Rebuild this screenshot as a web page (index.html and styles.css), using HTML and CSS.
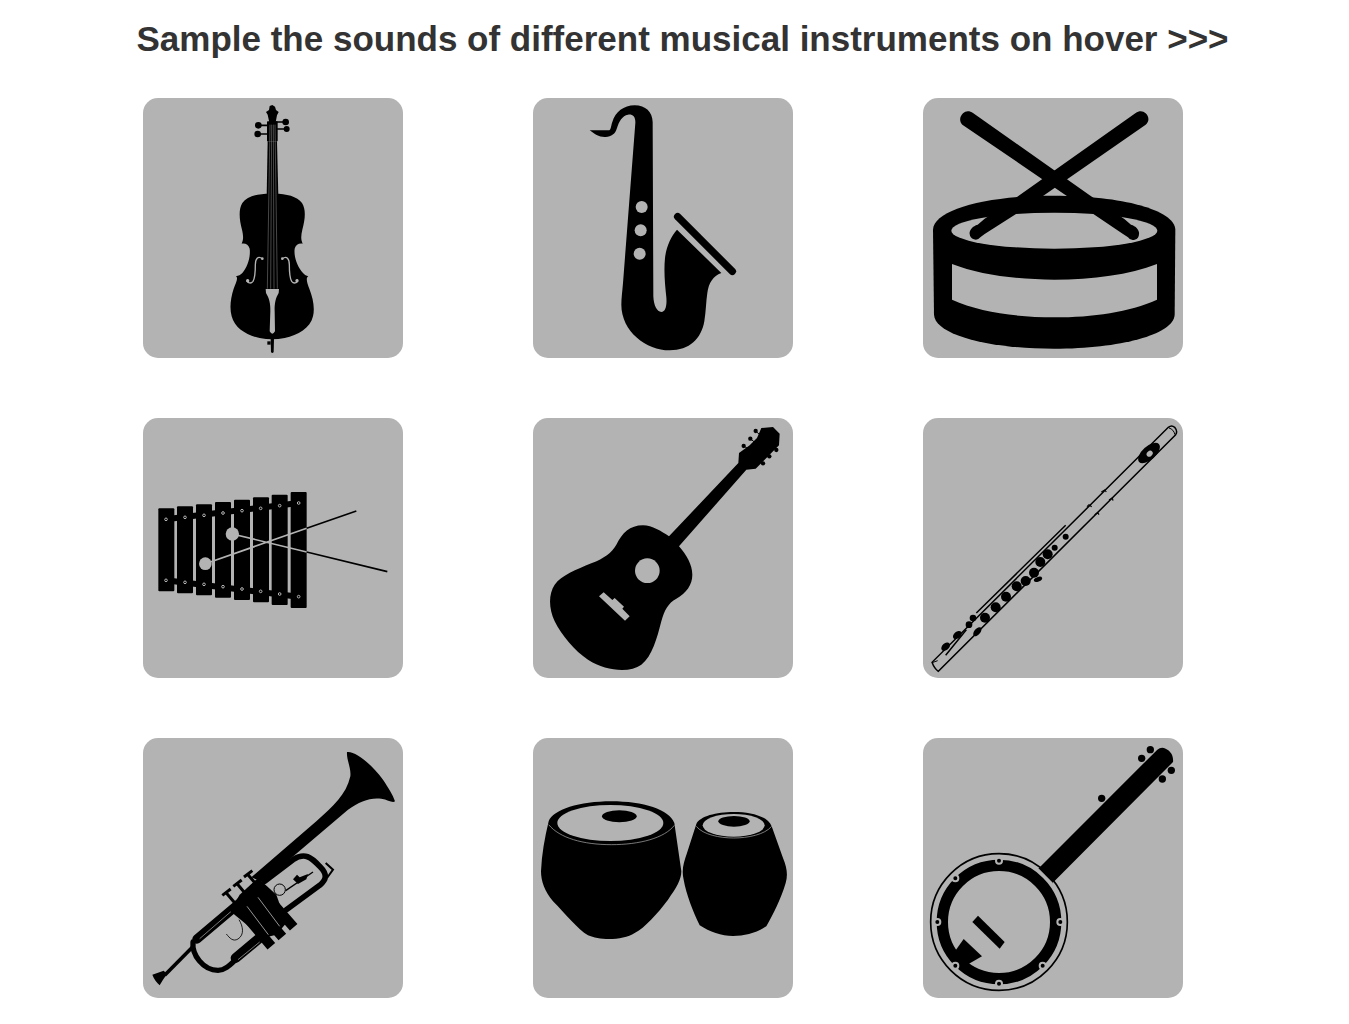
FILE: index.html
```html
<!DOCTYPE html>
<html lang="en">
<head>
<meta charset="utf-8">
<title>Musical instruments</title>
<link rel="stylesheet" href="styles.css">
</head>
<body>
<h1 class="title">Sample the sounds of different musical instruments on hover &gt;&gt;&gt;</h1>
<main class="grid">
  <div class="card"><svg class="icon" viewBox="0 0 780 780" aria-label="Cello">
    <path d="M388 287C425 286 462 293 477 315C490 335 486 365 478 395C474 412 473 425 479 437C468 435 458 440 455 452C452 475 462 505 480 525C485 531 490 533 496 535C487 540 493 555 499 572C510 600 516 630 510 655C502 690 465 712 425 720C400 725 375 725 350 720C310 712 275 690 266 655C259 630 263 600 272 572C278 555 287 540 279 535C287 533 292 531 298 525C315 505 323 475 320 452C317 440 307 435 296 437C302 425 301 412 297 395C289 365 286 335 298 315C313 293 350 286 388 287Z"/>
    <path d="M371 295L374 130H402L406 295Z"/>
    <path d="M380 78L374 50L369 42L378 36L380 24L388 21L396 26L399 36L407 42L402 52L397 78Z"/>
    <rect x="372" y="70" width="32" height="60" rx="2"/>
    <circle cx="346" cy="82" r="10"/><circle cx="344" cy="108" r="10"/><circle cx="428" cy="72" r="10"/><circle cx="431" cy="93" r="9"/>
    <path class="ln" d="M346 82H380M344 108H380M428 72H398M431 93H398" stroke-width="5"/>
    <path class="gl" d="M381 80L373 572M386 80L383 572M391 80L393 572M396 80L403 572" stroke-width="1.2"/>
    <path class="g" d="M368 573H408L407 585C398 600 394 615 395 640L396 700Q388 714 380 700L382 640C383 615 378 600 369 585Z"/>
    <path class="gl" d="M358 482C345 472 337 482 337 500C337 520 336 540 330 550C322 560 309 552 314 545M418 482C431 472 439 482 439 500C439 520 440 540 446 550C454 560 467 552 462 545" stroke-width="4"/>
    <circle class="g" cx="314" cy="548" r="5"/><circle class="g" cx="462" cy="548" r="5"/><circle class="g" cx="358" cy="482" r="4"/><circle class="g" cx="418" cy="482" r="4"/>
    <path d="M383 722H393L392 762Q388 768 384 762Z"/><rect x="373" y="730" width="10" height="10"/>
  </svg></div>
  <div class="card"><svg class="icon" viewBox="0 0 780 780" aria-label="Saxophone">
    <path d="M170 97H226C235 97 233 85 238 72C247 42 272 22 305 22C338 22 358 42 359 72L361 595C362 622 372 642 385 642C398 642 402 622 400 598C396 560 392 520 396 480C400 445 414 415 432 395L565 525C540 534 527 555 523 585C519 610 519 640 514 670C505 722 470 757 410 757C340 757 265 700 265 620C265 600 268 580 270 555L307 75C308 55 298 48 285 50C268 53 258 70 252 90C247 108 235 116 218 117C198 118 185 108 170 97Z"/>
    <circle class="g" cx="326" cy="327" r="18"/><circle class="g" cx="323" cy="397" r="18"/><circle class="g" cx="320" cy="467" r="18"/>
    <path class="ln" d="M434 356L598 520" stroke-width="22" stroke-linecap="round"/>
  </svg></div>
  <div class="card"><svg class="icon" viewBox="0 0 780 780" aria-label="Snare drum">
    <path d="M30 395C32 335 190 293 393 293C596 293 755 335 757 395L755 650C752 710 590 752 393 752C196 752 36 710 33 650Z"/>
    <ellipse class="g" cx="394" cy="398" rx="309" ry="54"/>
    <path class="g" d="M87 498C170 530 280 545 394 545C510 545 620 530 702 498V605C620 642 510 658 394 658C280 658 170 642 87 605Z"/>
    <path d="M120 46C128 38 140 38 150 45L500 292L605 364L624 380C640 384 650 398 648 408A18 18 0 0 1 615 418L600 408L470 320L118 80C108 70 110 56 120 46Z"/>
    <path d="M668 46C660 38 648 38 638 45L285 295L185 362L164 380C148 384 138 398 140 408A18 18 0 0 0 172 418L185 408L320 322L668 80C680 70 678 56 668 46Z"/>
  </svg></div>
  <div class="card"><svg class="icon" viewBox="0 0 780 780" aria-label="Xylophone">
    <path class="ln" d="M69 304L467 255M69 487L467 536" stroke-width="18"/>
    <rect x="46" y="271" width="48" height="249" rx="3"/><rect x="102" y="265" width="48" height="261" rx="3"/><rect x="159" y="259" width="48" height="273" rx="3"/><rect x="216" y="252" width="48" height="287" rx="3"/><rect x="273" y="245" width="48" height="301" rx="3"/><rect x="330" y="238" width="48" height="315" rx="3"/><rect x="386" y="230" width="48" height="331" rx="3"/><rect x="443" y="222" width="48" height="348" rx="3"/>
    <g class="holes"><circle cx="69" cy="304" r="4"/><circle cx="126" cy="298" r="4"/><circle cx="183" cy="292" r="4"/><circle cx="240" cy="285" r="4"/><circle cx="297" cy="278" r="4"/><circle cx="353" cy="271" r="4"/><circle cx="410" cy="263" r="4"/><circle cx="467" cy="255" r="4"/><circle cx="69" cy="487" r="4"/><circle cx="126" cy="493" r="4"/><circle cx="183" cy="499" r="4"/><circle cx="240" cy="506" r="4"/><circle cx="297" cy="513" r="4"/><circle cx="353" cy="520" r="4"/><circle cx="410" cy="528" r="4"/><circle cx="467" cy="536" r="4"/></g>
    <path class="gl" d="M187 437L491 331M268 348L491 402" stroke-width="5"/>
    <path class="ln" d="M491 331L640 279M491 402L733 461" stroke-width="5"/>
    <circle class="g" cx="187" cy="437" r="19"/><circle class="g" cx="268" cy="348" r="20"/>
  </svg></div>
  <div class="card"><svg class="icon" viewBox="0 0 780 780" aria-label="Guitar">
    <path d="M408 355L616 135L618 105L650 82L672 60L685 30L720 27L740 47L738 82L712 108L692 128L668 152L640 155L438 385C460 410 478 440 478 470C478 500 460 525 430 542C405 556 395 575 385 610C372 660 358 715 325 740C290 765 220 760 165 725C125 700 85 650 65 610C48 575 45 530 65 500C85 472 130 455 175 436C215 420 235 405 250 380C268 345 290 322 330 322C358 322 385 340 408 355Z"/>
    <circle class="g" cx="343" cy="458" r="37"/>
    <path class="g" d="M212 523L238 546L245 540L273 566L268 572L290 595L276 608L198 535Z"/>
    <g><circle cx="668" cy="39" r="6.5"/><circle cx="652" cy="62" r="6.5"/><circle cx="632" cy="84" r="6.5"/><circle cx="730" cy="96" r="6.5"/><circle cx="709" cy="115" r="6.5"/><circle cx="690" cy="136" r="6.5"/></g>
    <path class="ln" d="M668 39L680 50M652 62L664 72M632 84L645 92M730 96L718 88M709 115L698 104M690 136L680 124" stroke-width="3"/>
  </svg></div>
  <div class="card"><svg class="icon" viewBox="0 0 780 780" aria-label="Flute">
    <path class="out" d="M736 28Q746 20 755 28Q765 40 758 50L46 760Q34 752 27 733Z" stroke-width="4.5"/>
    <path class="ln" d="M738 30Q752 34 756 50M30 733L44 728" stroke-width="3"/>
    <path class="ln" d="M428 322L160 585M130 635L68 712" stroke-width="4.5"/>
    <path class="ln" d="M535 222L545 216L550 222M492 266L498 260L506 266M558 246L568 240L570 248M515 290L524 284L528 290" stroke-width="3.5"/>
    <ellipse cx="678" cy="105" rx="40" ry="20" transform="rotate(-42 678 105)"/>
    <ellipse class="g" cx="680" cy="107" rx="10" ry="8" transform="rotate(-42 680 107)"/>
    <circle cx="428" cy="356" r="9"/><circle cx="395" cy="389" r="9"/><circle cx="374" cy="409" r="15"/><circle cx="352" cy="432" r="15"/><circle cx="333" cy="464" r="15"/><circle cx="308" cy="489" r="15"/><circle cx="281" cy="505" r="15"/><circle cx="249" cy="536" r="15"/><circle cx="218" cy="568" r="15"/><circle cx="186" cy="599" r="15"/>
    <circle cx="150" cy="600" r="10"/><circle cx="138" cy="620" r="10"/>
    <ellipse cx="345" cy="484" rx="13" ry="7" transform="rotate(-20 345 484)"/>
    <ellipse cx="163" cy="641" rx="16" ry="9" transform="rotate(-50 163 641)"/>
    <ellipse cx="103" cy="651" rx="15" ry="10" transform="rotate(-40 103 651)"/>
    <ellipse cx="68" cy="686" rx="15" ry="10" transform="rotate(-40 68 686)"/>
  </svg></div>
  <div class="card"><svg class="icon" viewBox="0 0 780 780" aria-label="Trumpet">
    <path d="M612 42C640 38 690 85 720 125C735 148 750 170 756 190C748 196 735 185 715 182C680 178 650 190 615 215L360 432L325 418L520 250C570 205 610 170 622 115C625 90 610 65 612 42Z"/>
    <path d="M28 710L62 698L72 708L60 725L50 742C42 735 32 722 28 710Z"/>
    <path class="ln" d="M65 712L148 628" stroke-width="11"/>
    <path class="lnr" d="M162 603L290 495L345 440" stroke-width="28"/>
    <path class="lnr" d="M150 612C146 650 180 697 225 697C245 697 260 682 278 665" stroke-width="16"/>
    <path class="lnr" d="M278 660L350 600" stroke-width="30"/>
    <path class="lnr" d="M365 430L450 365C485 342 505 358 530 385C555 410 550 425 530 442L430 515" stroke-width="17"/>
    <path class="gl" d="M285 665L350 612M170 602L268 517" stroke-width="2"/>
    <path d="M262 520L290 470L345 420L400 470L430 555L400 590L360 600Z"/>
    <path class="ln" d="M280 500L385 625M310 470L418 597M342 442L452 568" stroke-width="30"/>
    <path class="gl" d="M312 505L376 590M345 478L410 565" stroke-width="2.5"/>
    <path class="ln" d="M238 472L263 453M271 445L296 426M303 417L328 398M250 465L280 500M283 438L310 470M315 410L342 442" stroke-width="9"/>
    <circle class="rg" cx="410" cy="455" r="17" stroke-width="3"/>
    <path class="ln" d="M428 458L510 402" stroke-width="4"/>
    <path d="M450 424L462 410L470 418L495 408L490 424L465 438Z"/>
    <path class="ln" d="M548 375L570 395L552 420" stroke-width="6"/>
    <path class="ln" d="M288 545C300 565 305 590 285 603C270 612 260 600 250 588" stroke-width="2.5"/>
  </svg></div>
  <div class="card"><svg class="icon" viewBox="0 0 780 780" aria-label="Tabla">
    <path d="M47 250C60 215 140 190 235 190C330 190 410 215 424 255L445 400C445 425 430 450 405 485C375 525 335 570 305 585C270 608 200 608 165 592C135 575 95 525 60 490C35 460 24 430 24 400C26 350 35 300 47 250Z"/>
    <ellipse class="g" cx="232" cy="255" rx="159" ry="54"/>
    <ellipse cx="259" cy="235" rx="52" ry="18"/>
    <path class="gl" d="M47 260C80 300 150 320 235 320C320 320 395 300 424 262" stroke-width="2"/>
    <path d="M490 258C500 235 550 222 602 222C655 222 705 235 716 265L750 360C762 390 765 410 758 435C745 480 720 530 700 565C670 585 635 594 600 594C565 594 530 582 500 562C480 520 460 470 452 425C445 395 452 375 462 345Z"/>
    <ellipse class="g" cx="602" cy="262" rx="93" ry="34"/>
    <ellipse cx="603" cy="250" rx="47" ry="16"/>
    <path class="gl" d="M490 265C510 290 560 300 602 300C645 300 695 290 716 265" stroke-width="2"/>
  </svg></div>
  <div class="card"><svg class="icon" viewBox="0 0 780 780" aria-label="Banjo">
    <circle class="rg" cx="228" cy="552" r="205" stroke-width="5"/>
    <circle class="rg" cx="228" cy="552" r="170" stroke-width="34"/>
    <path d="M345 393L650 88L703 35Q715 25 728 32C745 40 752 55 750 72L697 125L388 436Z"/>
    <path class="gs" d="M345 392L388 436" stroke-width="4"/>
    <circle cx="682" cy="35" r="11"/><circle cx="656" cy="61" r="11"/><circle cx="745" cy="97" r="11"/><circle cx="718" cy="123" r="11"/><circle cx="536" cy="181" r="11"/>
    <g class="lugs"><circle cx="228" cy="368" r="9"/><circle cx="97" cy="421" r="9"/><circle cx="43" cy="552" r="9"/><circle cx="97" cy="683" r="9"/><circle cx="228" cy="737" r="9"/><circle cx="359" cy="683" r="9"/><circle cx="412" cy="552" r="9"/></g>
    <path d="M165 533L245 612L230 632L148 552Z"/>
    <path d="M122 603L177 655L130 682L100 655L96 640Z"/>
  </svg></div>
</main>
</body>
</html>
```
FILE: styles.css
```css
html, body {
  margin: 0;
  padding: 0;
  background: #fff;
}

.title {
  margin: 0;
  padding: 18px 0 0 16px;
  height: 80px;
  box-sizing: border-box;
  text-align: center;
  font: bold 35px/42px "Liberation Sans", Arial, sans-serif;
  color: #333;
  white-space: nowrap;
}

.grid {
  display: grid;
  grid-template-columns: repeat(3, 260px);
  column-gap: 130px;
  row-gap: 60px;
  padding: 18px 0 26px 143px;
}

.card {
  width: 260px;
  height: 260px;
  border-radius: 15px;
  background: #b3b3b3;
}

.icon {
  display: block;
  width: 260px;
  height: 260px;
  fill: #000;
}

.g { fill: #b3b3b3; }
.gl { fill: none; stroke: #b3b3b3; }
.gs { fill: none; stroke: #b3b3b3; }
.ln { fill: none; stroke: #000; }
.lnr { fill: none; stroke: #000; stroke-linecap: round; stroke-linejoin: round; }
.rg { fill: none; stroke: #000; }
.out { fill: #b3b3b3; stroke: #000; }
.holes circle { fill: #000; stroke: #b3b3b3; stroke-width: 3; }
.lugs circle { fill: #000; stroke: #b3b3b3; stroke-width: 6; }
```
